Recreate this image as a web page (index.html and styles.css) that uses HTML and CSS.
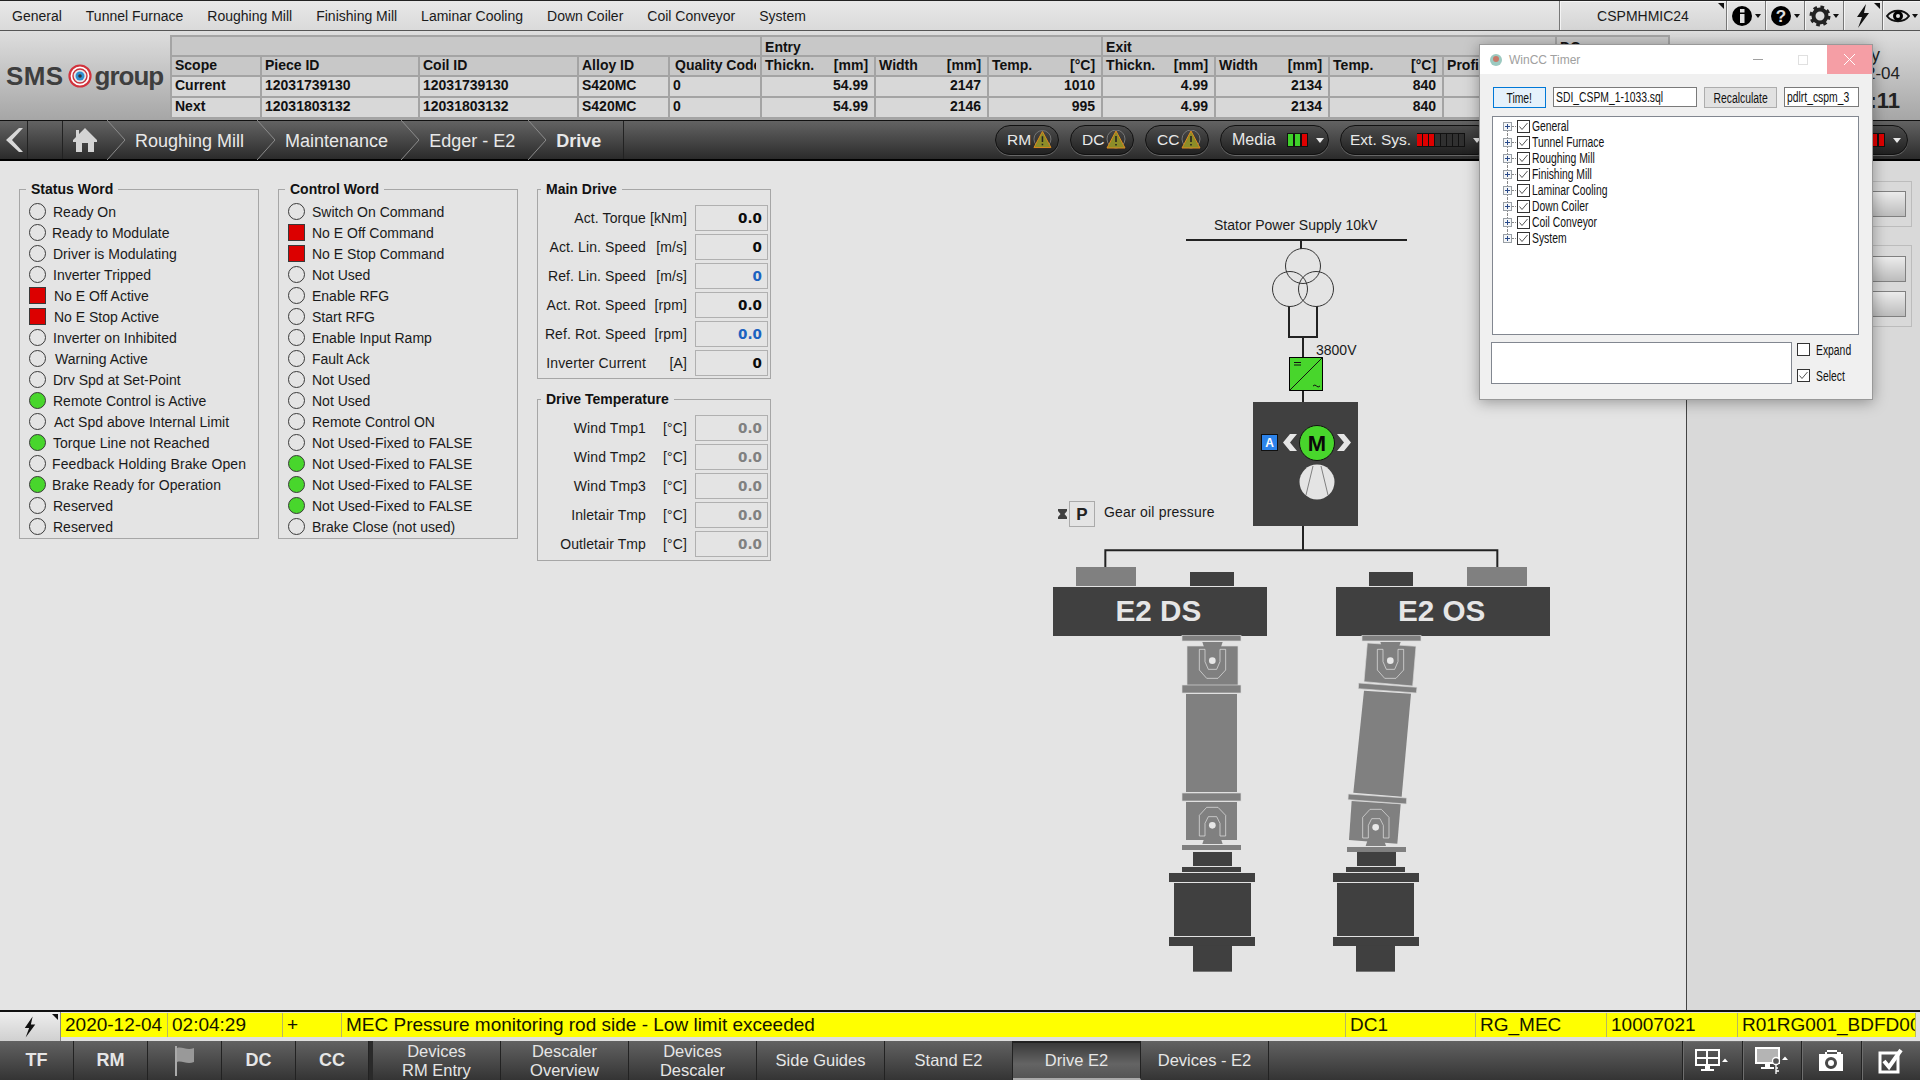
FILE: index.html
```html
<!DOCTYPE html>
<html>
<head>
<meta charset="utf-8">
<title>Drive E2</title>
<link rel="stylesheet" href="styles.css">
</head>
<body>
<svg class="defs">
  <symbol id="bolt" viewBox="0 0 16 24"><path d="M11 0 L2 13 H7 L3 24 L14 9 H9 Z"/></symbol>
  <symbol id="plus" viewBox="0 0 9 9"><rect x=".5" y=".5" width="8" height="8" fill="#f4f6f8" stroke="#9aa0a6"/><path d="M2 4.5 H7 M4.5 2 V7" stroke="#2a4a8a"/></symbol>
  <symbol id="tick" viewBox="0 0 13 13"><rect x=".5" y=".5" width="12" height="12" fill="#fff" stroke="#333"/><path d="M2.5 6.5 L5 9.5 L10.5 3" fill="none" stroke="#555"/></symbol>
  <symbol id="warn" viewBox="0 0 20 20"><circle cx="10" cy="9" r="9" fill="none" stroke="#777"/><path d="M10 1 L19 18 H1 Z" fill="#8d8d28" stroke="#e08a1e"/><path d="M10 6 V12 M10 14 V15.5" stroke="#222" stroke-width="1.6"/></symbol>
</svg>

<div class="menu">
  <div class="menu-items">
    <span>General</span><span>Tunnel Furnace</span><span>Roughing Mill</span><span>Finishing Mill</span><span>Laminar Cooling</span><span>Down Coiler</span><span>Coil Conveyor</span><span>System</span>
  </div>
  <div class="tool host">CSPMHMIC24</div>
  <div class="tool">
    <svg width="22" height="22" viewBox="0 0 22 22"><circle cx="11" cy="11" r="10"/><rect x="9" y="9" width="4.5" height="9" fill="#e0e0e0"/><rect x="9" y="4" width="4.5" height="3.5" fill="#e0e0e0"/></svg><b class="caret dark"></b>
  </div>
  <div class="tool">
    <svg width="22" height="22" viewBox="0 0 22 22"><circle cx="11" cy="11" r="10"/><text x="11" y="17" class="q">?</text></svg><b class="caret dark"></b>
  </div>
  <div class="tool">
    <svg width="22" height="22" viewBox="0 0 22 22"><circle cx="11" cy="11" r="6.5" fill="none" stroke="#222" stroke-width="4"/><circle cx="11" cy="11" r="8.5" fill="none" stroke="#222" stroke-width="4" stroke-dasharray="3.4 3.3"/></svg><b class="caret dark"></b>
  </div>
  <div class="tool corner"><svg width="16" height="24" fill="#111"><use href="#bolt"/></svg></div>
  <div class="tool end">
    <svg width="24" height="16" viewBox="0 0 24 16"><path d="M1 8 C6 1 18 1 23 8 C18 15 6 15 1 8 Z" fill="#e0e0e0" stroke="#111" stroke-width="2"/><circle cx="12" cy="8" r="5"/><circle cx="12" cy="8" r="2" fill="#e0e0e0"/></svg><b class="caret dark"></b>
  </div>
</div>

<div class="head">
  <div class="logo">
    <span class="logo-sms">SMS</span>
    <svg width="24" height="24" viewBox="0 0 24 24"><circle cx="12" cy="12" r="10.5" fill="#fff" stroke="#d2323c" stroke-width="2.2"/><circle cx="12" cy="12" r="7" fill="#e8e8e8" stroke="#c8323c" stroke-width="1.4"/><circle cx="12" cy="12" r="4.5" fill="#2f8fd0"/><circle cx="12" cy="12" r="1.8" fill="#333"/></svg>
    <span class="logo-group">group</span>
  </div>
  <table class="coils">
    <colgroup>
      <col class="c90"><col class="c158"><col class="c159"><col class="c91"><col class="c92">
      <col class="c114"><col class="c113"><col class="c114"><col class="c113"><col class="c114"><col class="c114"><col class="c113"><col class="c113">
    </colgroup>
    <tr class="group"><th colspan="5"></th><th colspan="3">Entry</th><th colspan="4">Exit</th><th>DC</th></tr>
    <tr class="names">
      <th>Scope</th><th>Piece ID</th><th>Coil ID</th><th>Alloy ID</th><th><div class="clip">Quality Code</div></th>
      <th><div class="unit"><span>Thickn.</span><span>[mm]</span></div></th>
      <th><div class="unit"><span>Width</span><span>[mm]</span></div></th>
      <th><div class="unit"><span>Temp.</span><span>[°C]</span></div></th>
      <th><div class="unit"><span>Thickn.</span><span>[mm]</span></div></th>
      <th><div class="unit"><span>Width</span><span>[mm]</span></div></th>
      <th><div class="unit"><span>Temp.</span><span>[°C]</span></div></th>
      <th>Profile</th><th></th>
    </tr>
    <tr>
      <td>Current</td><td>12031739130</td><td>12031739130</td><td>S420MC</td><td>0</td>
      <td class="num">54.99</td><td class="num">2147</td><td class="num">1010</td><td class="num">4.99</td><td class="num">2134</td><td class="num">840</td><td></td><td></td>
    </tr>
    <tr>
      <td>Next</td><td>12031803132</td><td>12031803132</td><td>S420MC</td><td>0</td>
      <td class="num">54.99</td><td class="num">2146</td><td class="num">995</td><td class="num">4.99</td><td class="num">2134</td><td class="num">840</td><td></td><td></td>
    </tr>
  </table>
  <div class="clock">
    <span class="clock-day">Friday</span>
    <span class="clock-date">2020-12-04</span>
    <span class="clock-time">02:04:11</span>
  </div>
</div>

<div class="bar">
  <div class="back"><svg width="18" height="24" viewBox="0 0 18 24"><path d="M14 0 H18 L7 12 L18 24 H14 L1 12 Z" fill="#d8d8d8"/></svg></div>
  <div class="home">
    <svg width="24" height="24" viewBox="0 0 24 24"><path d="M12 0 L24 12 V14 H21 V24 H15 V15 H9 V24 H3 V14 H0 V12 L3 9 V2 H6 V6 Z" fill="#d4d4d4"/></svg>
  </div>
  <svg class="chev" width="18" height="40" viewBox="0 0 18 40"><path d="M0 0 L18 20 L0 40"/></svg>
  <span class="crumb">Roughing Mill</span>
  <svg class="chev" width="18" height="40" viewBox="0 0 18 40"><path d="M0 0 L18 20 L0 40"/></svg>
  <span class="crumb">Maintenance</span>
  <svg class="chev" width="18" height="40" viewBox="0 0 18 40"><path d="M0 0 L18 20 L0 40"/></svg>
  <span class="crumb">Edger - E2</span>
  <svg class="chev" width="18" height="40" viewBox="0 0 18 40"><path d="M0 0 L18 20 L0 40"/></svg>
  <span class="crumb now">Drive</span>
  <div class="pills">
    <div class="pill alarm">RM<svg width="20" height="20"><use href="#warn"/></svg></div>
    <div class="pill alarm">DC<svg width="20" height="20"><use href="#warn"/></svg></div>
    <div class="pill alarm">CC<svg width="20" height="20"><use href="#warn"/></svg></div>
    <div class="pill media">Media<span class="lamps"><i class="g"></i><i class="g"></i><i class="r"></i></span><b class="caret"></b></div>
    <div class="pill ext">Ext. Sys.<span class="lamps"><i class="r"></i><i class="r"></i><i class="r"></i><i></i><i></i><i></i><i></i><i></i></span><b class="caret"></b></div>
    <div class="pill last"><span class="lamps"><i class="r"></i><i class="r"></i></span><b class="caret"></b></div>
  </div>
</div>

<div class="main">
  <fieldset class="word">
    <legend>Status Word</legend>
    <div class="led"><i></i><span>Ready On</span></div>
    <div class="led"><i></i><span class="l1">Ready to Modulate</span></div>
    <div class="led"><i></i><span>Driver is Modulating</span></div>
    <div class="led"><i></i><span>Inverter Tripped</span></div>
    <div class="led"><i class="red"></i><span class="r1">No E Off Active</span></div>
    <div class="led"><i class="red"></i><span class="r1">No E Stop Active</span></div>
    <div class="led"><i></i><span>Inverter on Inhibited</span></div>
    <div class="led"><i></i><span class="r2">Warning Active</span></div>
    <div class="led"><i></i><span>Drv Spd at Set-Point</span></div>
    <div class="led"><i class="on"></i><span>Remote Control is Active</span></div>
    <div class="led"><i></i><span class="r1">Act Spd above Internal Limit</span></div>
    <div class="led"><i class="on"></i><span>Torque Line not Reached</span></div>
    <div class="led"><i></i><span class="l1 wide">Feedback Holding Brake Open</span></div>
    <div class="led"><i class="on"></i><span class="l1 wide">Brake Ready for Operation</span></div>
    <div class="led"><i></i><span>Reserved</span></div>
    <div class="led"><i></i><span>Reserved</span></div>
  </fieldset>
  <fieldset class="word">
    <legend>Control Word</legend>
    <div class="led"><i></i><span>Switch On Command</span></div>
    <div class="led"><i class="red"></i><span>No E Off Command</span></div>
    <div class="led"><i class="red"></i><span>No E Stop Command</span></div>
    <div class="led"><i></i><span>Not Used</span></div>
    <div class="led"><i></i><span>Enable RFG</span></div>
    <div class="led"><i></i><span>Start RFG</span></div>
    <div class="led"><i></i><span>Enable Input Ramp</span></div>
    <div class="led"><i></i><span>Fault Ack</span></div>
    <div class="led"><i></i><span>Not Used</span></div>
    <div class="led"><i></i><span>Not Used</span></div>
    <div class="led"><i></i><span>Remote Control ON</span></div>
    <div class="led"><i></i><span>Not Used-Fixed to FALSE</span></div>
    <div class="led"><i class="on"></i><span>Not Used-Fixed to FALSE</span></div>
    <div class="led"><i class="on"></i><span>Not Used-Fixed to FALSE</span></div>
    <div class="led"><i class="on"></i><span>Not Used-Fixed to FALSE</span></div>
    <div class="led"><i></i><span>Brake Close (not used)</span></div>
  </fieldset>
  <div class="drive-col">
    <fieldset class="vals main-drive">
      <legend>Main Drive</legend>
      <div class="val"><span>Act. Torque</span><span>[kNm]</span><b>0.0</b></div>
      <div class="val"><span>Act. Lin. Speed</span><span>[m/s]</span><b>0</b></div>
      <div class="val"><span>Ref. Lin. Speed</span><span>[m/s]</span><b class="ref">0</b></div>
      <div class="val"><span>Act. Rot. Speed</span><span>[rpm]</span><b>0.0</b></div>
      <div class="val"><span>Ref. Rot. Speed</span><span>[rpm]</span><b class="ref">0.0</b></div>
      <div class="val"><span>Inverter Current</span><span>[A]</span><b>0</b></div>
    </fieldset>
    <fieldset class="vals temps">
      <legend>Drive Temperature</legend>
      <div class="val"><span>Wind Tmp1</span><span>[°C]</span><b class="dim">0.0</b></div>
      <div class="val"><span>Wind Tmp2</span><span>[°C]</span><b class="dim">0.0</b></div>
      <div class="val"><span>Wind Tmp3</span><span>[°C]</span><b class="dim">0.0</b></div>
      <div class="val"><span>Inletair Tmp</span><span>[°C]</span><b class="dim">0.0</b></div>
      <div class="val"><span>Outletair Tmp</span><span>[°C]</span><b class="dim">0.0</b></div>
    </fieldset>
  </div>

  <svg class="diagram" width="646" height="849" viewBox="1040 161 646 849">
    <text x="1214" y="230" class="lbl">Stator Power Supply 10kV</text>
    <path d="M1186 240 H1407 M1301 240 V249 M1289 306 V337 H1317 V306 M1303 337 V358 M1303 391 V402 M1303 526 V551" class="wire"/>
    <circle cx="1303" cy="266" r="17.5" class="coil"/>
    <circle cx="1290" cy="289" r="17.5" class="coil"/>
    <circle cx="1316" cy="289" r="17.5" class="coil"/>
    <text x="1316" y="355" class="lbl">3800V</text>
    <rect x="1289.5" y="357.5" width="33" height="33" fill="#48d62c" stroke="#000"/>
    <path d="M1289 391 L1323 357 M1294 362.5 H1301 M1294 365 H1301 M1313 386 q2 -2 3.500 0 t3.500 0" fill="none" stroke="#111"/>

    <rect x="1253" y="402" width="105" height="124" fill="#404040"/>
    <rect x="1261.500" y="434.500" width="16" height="16" fill="#2c83ea" stroke="#111"/>
    <text x="1269.500" y="447" class="badge">A</text>
    <path d="M1297 434 H1290 L1283 442.500 L1290 451 H1297 L1290 442.500 Z M1337 434 H1344 L1351 442.500 L1344 451 H1337 L1344 442.500 Z" fill="#e6e6e6"/>
    <circle cx="1317" cy="443" r="17.500" fill="#48d62c" stroke="#111"/>
    <text x="1317" y="451" class="motor">M</text>
    <circle cx="1317" cy="482" r="17.500" fill="#e4e4e4"/>
    <path d="M1313 466 L1306 495 M1321 466 L1328 495" stroke="#808080" fill="none"/>

    <path d="M1058 509 H1067 V511 L1064.500 514 L1067 517 V519 H1058 V517 L1060.500 514 L1058 511 Z" fill="#404040"/>
    <rect x="1069.500" y="501.500" width="25" height="25" fill="none" stroke="#aaa"/>
    <text x="1082" y="520" class="pfont">P</text>
    <text x="1104" y="517" class="lbl oil">Gear oil pressure</text>

    <g transform="translate(1040 540) scale(.33333)">
      <path d="M196 87 V31 H1372 V87" class="wire thick"/>

      <rect x="108" y="81" width="180" height="57" fill="#808080"/>
      <rect x="450" y="96" width="132" height="42" fill="#404040"/>
      <rect x="39" y="141" width="642" height="147" fill="#404040"/>
      <text x="355" y="242" class="roll">E2 DS</text>

      <rect x="1281" y="81" width="180" height="57" fill="#808080"/>
      <rect x="987" y="96" width="132" height="42" fill="#404040"/>
      <rect x="888" y="141" width="642" height="147" fill="#404040"/>
      <text x="1205" y="242" class="roll">E2 OS</text>

      <g class="shaft">
        <rect x="426" y="287" width="177" height="16"/>
        <rect x="441" y="318" width="153" height="118"/>
        <rect x="426" y="435" width="177" height="24"/>
        <rect x="438" y="462" width="153" height="294" class="plain"/>
        <rect x="426" y="759" width="177" height="24"/>
        <rect x="438" y="786" width="153" height="114" class="plain"/>
        <rect x="426" y="915" width="177" height="15" class="plain"/>
      </g>
      <g class="shaft">
        <rect x="966" y="287" width="177" height="16"/>
        <path d="M982 309 L1128 319 L1118 438 L972 425 Z"/>
        <path d="M956 429 L1131 442 L1129 459 L955 446 Z"/>
        <path d="M972 452 L1113 461 L1085 770 L940 758 Z" class="plain"/>
        <path d="M925 762 L1100 774 L1099 792 L924 779 Z"/>
        <path d="M935 783 L1082 793 L1072 911 L927 900 Z" class="plain"/>
        <rect x="921" y="921" width="177" height="15" class="plain"/>
      </g>

      <g class="yoke" id="yoke-top">
        <path d="M487 306 H548 L540 330 V365 L530 388 H505 L495 365 V330 Z" class="pad"/>
        <path d="M495 328 H478 V390 L500 415 H534 L557 390 V328 H540 M495 328 V365 L505 388 H530 L540 365 V328"/>
        <circle cx="517" cy="362" r="10" class="pin"/>
      </g>
      <use href="#yoke-top" x="534" y="0"/>
      <g class="yoke" id="yoke-bot">
        <path d="M487 912 H548 L540 888 V850 L530 830 H505 L495 850 V888 Z" class="pad"/>
        <path d="M495 888 H478 V826 L500 802 H534 L557 826 V888 H540 M495 888 V850 L505 830 H530 L540 850 V888"/>
        <circle cx="517" cy="856" r="10" class="pin"/>
      </g>
      <use href="#yoke-bot" x="490" y="6"/>

      <g fill="#404040">
        <rect x="459" y="936" width="117" height="42"/>
        <rect x="426" y="981" width="177" height="15"/>
        <rect x="387" y="999" width="258" height="27"/>
        <rect x="402" y="1029" width="231" height="159"/>
        <rect x="387" y="1191" width="258" height="27"/>
        <rect x="459" y="1218" width="117" height="77"/>
        <rect x="951" y="936" width="117" height="42"/>
        <rect x="918" y="981" width="177" height="15"/>
        <rect x="879" y="999" width="258" height="27"/>
        <rect x="891" y="1029" width="231" height="159"/>
        <rect x="879" y="1191" width="258" height="27"/>
        <rect x="948" y="1218" width="117" height="77"/>
      </g>
    </g>
  </svg>

  <div class="side">
    <div class="side-box"><div class="side-btn"></div></div>
    <div class="side-box"><div class="side-btn"></div><div class="side-btn"></div></div>
  </div>
</div>

<div class="alarm-row">
  <div class="alarm-btn corner"><svg width="14" height="22" fill="#111"><use href="#bolt"/></svg></div>
  <div class="alarm-line">
    <span class="w107">2020-12-04</span><span class="w115">02:04:29</span><span class="w59">+</span><span class="w1004">MEC Pressure monitoring rod side - Low limit exceeded</span><span class="w130">DC1</span><span class="w131">RG_MEC</span><span class="w131">10007021</span><span class="w178">R01RG001_BDFD001</span>
  </div>
</div>

<div class="nav">
  <div class="nb short heavy">TF</div>
  <div class="nb short heavy">RM</div>
  <div class="nb short"><svg width="20" height="30" viewBox="0 0 20 30"><path d="M1 0 V30" stroke="#aaa" stroke-width="2"/><path d="M2 2 C7 0 12 5 19 2 V16 C12 19 7 14 2 16 Z" fill="#999"/></svg></div>
  <div class="nb short heavy">DC</div>
  <div class="nb short heavy gap">CC</div>
  <div class="nb two"><span>Devices</span><span>RM Entry</span></div>
  <div class="nb two"><span>Descaler</span><span>Overview</span></div>
  <div class="nb two"><span>Devices</span><span>Descaler</span></div>
  <div class="nb">Side Guides</div>
  <div class="nb">Stand E2</div>
  <div class="nb active">Drive E2</div>
  <div class="nb">Devices - E2</div>
  <div class="nav-fill"></div>
  <div class="ib">
    <svg width="36" height="24" viewBox="0 0 36 24" fill="#fff"><path d="M1 0 H26 V17 H1 Z M3 2 V8 H12 V2 Z M14 2 V8 H24 V2 Z M3 10 V15 H12 V10 Z M14 10 V15 H24 V10 Z M11 17 H16 V20 H20 V22 H7 V20 H11 Z" fill-rule="evenodd"/><path d="M28 13 L31 9.500 L34 13 Z"/></svg>
  </div>
  <div class="ib">
    <svg width="36" height="28" viewBox="0 0 36 28" fill="#fff"><path d="M1 0 H26 V17 H1 Z"/><rect x="3" y="2" width="21" height="13" fill="#b4b4b4"/><path d="M11 17 H16 V20 H20 V22 H7 V20 H11 Z"/><circle cx="22" cy="14" r="3.500" fill="#555" stroke="#fff" stroke-width="1.300"/><path d="M22 18 V27 M22 24 H25 M22 21 H24" stroke="#fff" stroke-width="1.300" fill="none"/><path d="M28 13 L31 9.500 L34 13 Z"/></svg>
  </div>
  <div class="ib">
    <svg width="26" height="22" viewBox="0 0 26 22" fill="#fff"><path d="M1 4 H7 V2 H9 V0 H19 V2 H23 V4 H25 V21 H1 Z M9 2 V4 H19 V2 Z M13 7 A6 6 0 1 0 13 19 A6 6 0 1 0 13 7 Z" fill-rule="evenodd"/><circle cx="13" cy="13" r="3"/></svg>
  </div>
  <div class="ib">
    <svg width="26" height="26" viewBox="0 0 26 26"><rect x="2" y="5" width="18" height="19" fill="none" stroke="#fff" stroke-width="3"/><path d="M6 13 L11 19 L23 2" fill="none" stroke="#fff" stroke-width="4"/></svg>
  </div>
</div>

<div class="win">
  <div class="win-title">
    <svg width="14" height="14" viewBox="0 0 14 14"><circle cx="7" cy="7" r="6" fill="#9cc9c0"/><circle cx="7" cy="6" r="3" fill="#c87868"/></svg>
    <span class="win-name">WinCC Timer</span>
    <i class="win-min"></i><i class="win-max"></i>
    <div class="win-close"><svg width="11" height="11" viewBox="0 0 11 11"><path d="M0 0 L11 11 M11 0 L0 11" stroke="#fff"/></svg></div>
  </div>
  <div class="win-top">
    <div class="btn btn-on"><span class="sq mid">Time!</span></div>
    <div class="inp i144"><span class="sq">SDI_CSPM_1-1033.sql</span></div>
    <div class="btn"><span class="sq mid">Recalculate</span></div>
    <div class="inp i75"><span class="sq">pdlrt_cspm_3</span></div>
  </div>
  <div class="tree">
    <div class="node"><svg width="9" height="9"><use href="#plus"/></svg><u></u><svg width="13" height="13"><use href="#tick"/></svg><span class="sq">General</span></div>
    <div class="node"><svg width="9" height="9"><use href="#plus"/></svg><u></u><svg width="13" height="13"><use href="#tick"/></svg><span class="sq">Tunnel Furnace</span></div>
    <div class="node"><svg width="9" height="9"><use href="#plus"/></svg><u></u><svg width="13" height="13"><use href="#tick"/></svg><span class="sq">Roughing Mill</span></div>
    <div class="node"><svg width="9" height="9"><use href="#plus"/></svg><u></u><svg width="13" height="13"><use href="#tick"/></svg><span class="sq">Finishing Mill</span></div>
    <div class="node"><svg width="9" height="9"><use href="#plus"/></svg><u></u><svg width="13" height="13"><use href="#tick"/></svg><span class="sq">Laminar Cooling</span></div>
    <div class="node"><svg width="9" height="9"><use href="#plus"/></svg><u></u><svg width="13" height="13"><use href="#tick"/></svg><span class="sq">Down Coiler</span></div>
    <div class="node"><svg width="9" height="9"><use href="#plus"/></svg><u></u><svg width="13" height="13"><use href="#tick"/></svg><span class="sq">Coil Conveyor</span></div>
    <div class="node"><svg width="9" height="9"><use href="#plus"/></svg><u></u><svg width="13" height="13"><use href="#tick"/></svg><span class="sq">System</span></div>
  </div>
  <div class="win-bot">
    <div class="memo"></div>
    <div class="checks">
      <div class="chk"><svg width="13" height="13" viewBox="0 0 13 13"><rect x=".5" y=".5" width="12" height="12" fill="#fff" stroke="#333"/></svg><span class="sq">Expand</span></div>
      <div class="chk"><svg width="13" height="13"><use href="#tick"/></svg><span class="sq">Select</span></div>
    </div>
  </div>
</div>
</body>
</html>
```

FILE: styles.css
```css
* { box-sizing: border-box; }

html, body {
  margin: 0;
  height: 1080px;
  overflow: hidden;
}
body {
  display: flex;
  flex-direction: column;
  position: relative;
  background: #e4e4e4;
  color: #1a1a1a;
  font-family: "Liberation Sans", Arial, sans-serif;
  font-size: 14px;
}
.defs { position: absolute; width: 0; height: 0; }

.caret {
  display: inline-block;
  width: 0;
  height: 0;
  flex: none;
  border-left: 4px solid transparent;
  border-right: 4px solid transparent;
  border-top: 5px solid #e8e8e8;
}
.caret.dark { border-left-width: 3px; border-right-width: 3px; border-top: 4px solid #111; margin-left: 2px; }
.corner { position: relative; }
.corner::after {
  content: "";
  position: absolute;
  top: 2px;
  right: 2px;
  border-top: 6px solid #111;
  border-left: 6px solid transparent;
}

/* top menu */
.menu {
  display: flex;
  height: 31px;
  flex: none;
  border-top: 1px solid #222;
  border-bottom: 1px solid #555;
  background: linear-gradient(#e8e8e8, #dadada);
}
.menu-items {
  display: flex;
  gap: 24px;
  width: 1559px;
  padding-left: 12px;
  align-items: center;
}
.tool {
  display: flex;
  align-items: center;
  justify-content: center;
  width: 39px;
  border-left: 1px solid #777;
  box-shadow: inset 1px 1px 0 #f4f4f4;
  background: linear-gradient(#e6e6e6, #d4d4d4);
}
.tool.end { flex: 1; }
.host { width: 167px; font-size: 14px; position: relative; }
.host::after {
  content: "";
  position: absolute;
  top: 2px;
  right: 2px;
  border-top: 6px solid #111;
  border-left: 6px solid transparent;
}
.q { font: bold 17px "Liberation Sans", sans-serif; fill: #e0e0e0; text-anchor: middle; }

/* product header */
.head {
  display: flex;
  height: 89px;
  flex: none;
  background: linear-gradient(#dedede, #a6a6a6);
}
.logo {
  display: flex;
  align-items: center;
  width: 170px;
  flex: none;
  padding: 0 0 0 6px;
  height: 90px;
  font-size: 26px;
  font-weight: bold;
  color: #3e3e3e;
}
.logo-sms { margin-right: 4px; letter-spacing: .4px; }
.logo-group { margin-left: 3px; letter-spacing: -1px; }
.coils {
  table-layout: fixed;
  width: 1498px;
  height: 80px;
  flex: none;
  margin-top: 4px;
  border-collapse: collapse;
  font-weight: bold;
  font-size: 14px;
  color: #111;
}
.c90 { width: 90px; } .c91 { width: 91px; } .c92 { width: 92px; }
.c113 { width: 113px; } .c114 { width: 114px; }
.c158 { width: 158px; } .c159 { width: 159px; }
.coils th, .coils td {
  height: 20px;
  padding: 0 6px 2px 3px;
  border: 2px solid #a4a4a4;
  text-align: left;
  white-space: nowrap;
  overflow: hidden;
}
.coils tr { background: #d8d8d8; }
.coils tr.group, .coils tr.names { background: #c8c8c8; }
.coils tr.group th { padding-top: 1px; padding-bottom: 0; }
.coils td { padding-bottom: 3px; }
.coils td.num { text-align: right; }
.unit { display: flex; justify-content: space-between; }
.clip { width: 81px; margin-left: 2px; overflow: hidden; }
.clock {
  display: flex;
  flex-direction: column;
  align-items: flex-end;
  flex: 1;
  padding: 14px 20px 0 0;
  color: #222;
}
.clock-day { font-size: 18px; line-height: 20px; margin-right: 20px; }
.clock-date { font-size: 17px; line-height: 17px; }
.clock-time { font-size: 22px; font-weight: bold; line-height: 37px; }

/* breadcrumb bar */
.bar {
  display: flex;
  align-items: center;
  height: 41px;
  flex: none;
  color: #e8e8e8;
  font-size: 18px;
  border-top: 1px solid #111;
  border-bottom: 2px solid #000;
  background: linear-gradient(#636363, #2b2b2b);
}
.back {
  display: flex;
  align-items: center;
  justify-content: center;
  width: 28px;
  height: 100%;
  border-right: 1px solid #222;
}
.home {
  display: flex;
  align-items: center;
  width: 45px;
  height: 100%;
  margin-left: 34px;
  padding-left: 10px;
  border-left: 1px solid #222;
}
.chev { flex: none; }
.chev path { fill: none; stroke: #8c8c8c; }
.crumb { padding: 2px 13px 0 10px; }
.crumb.now { font-weight: bold; padding: 0 22px 0 10px; border-right: 1px solid #222; height: 100%; line-height: 40px; }
.pills {
  display: flex;
  gap: 11px;
  width: 913px;
  margin-left: auto;
  margin-right: 12px;
  font-size: 16px;
}
.pill {
  display: flex;
  align-items: center;
  flex: none;
  gap: 2px;
  height: 30px;
  padding: 0 6px 0 11px;
  border: 1px solid #111;
  border-radius: 15px;
  white-space: nowrap;
  background: linear-gradient(#4c4c4c, #202020);
  box-shadow: 0 1px 0 #666;
}
.pill.alarm { width: 64px; font-size: 15.500px; }
.media { width: 109px; padding-left: 11px; }
.ext { width: 152px; padding-left: 9px; font-size: 15.500px; }
.last { flex: 1; justify-content: flex-end; padding-right: 6px; }
.lamps { display: flex; flex: none; margin: 0 6px 0 9px; }
.ext .lamps { margin: 0 6px 0 4px; }
.lamps i {
  width: 6px;
  height: 14px;
  flex: none;
  border: 1px solid #111;
  background: #303030;
}
.ext .lamps i { border-left: 0; }
.media .lamps i { width: 7px; }
.last .lamps i { width: 7px; }
.lamps .g { background: #3fd02a; }
.lamps .r { background: #e00000; }
.ext .lamps .r { background: #e00000; }

/* main area */
.main {
  display: flex;
  flex: 1;
  min-height: 0;
  padding: 20px 0 0 19px;
}
fieldset {
  margin: 0;
  padding: 0;
  border: 1px solid #a6a6a6;
  min-width: 0;
}
legend {
  margin-left: 3px;
  padding: 0 5px;
  font-weight: bold;
  color: #111;
  line-height: 16px;
}
.word {
  width: 240px;
  height: 358px;
  margin-right: 19px;
  padding: 4px 0 0 9px;
  flex: none;
}
.word legend { margin-left: -3px; }
.led {
  display: flex;
  align-items: center;
  height: 21px;
  white-space: nowrap;
}
.led i {
  width: 17px;
  height: 17px;
  flex: none;
  margin-right: 7px;
  border: 1.500px solid #3a3a3a;
  border-radius: 50%;
}
.led i.on { background: #48d62c; }
.led i.red { background: #dc0000; border-radius: 0; }
.l1 { margin-left: -1px; }
.r1 { margin-left: 1px; }
.r2 { margin-left: 2px; }
.wide { letter-spacing: .1px; }

.drive-col { width: 234px; flex: none; }
.vals { width: 234px; padding-top: 8px; }
.main-drive { height: 198px; }
.temps { height: 170px; margin-top: 12px; }
.val {
  display: grid;
  grid-template-columns: 108px 41px 73px;
  column-gap: 0;
  align-items: center;
  height: 26px;
  margin-bottom: 3px;
  white-space: nowrap;
}
.val span { text-align: right; letter-spacing: .1px; }
.val b {
  margin-left: 8px;
  width: 73px;
  height: 26px;
  padding-right: 5px;
  text-align: right;
  border: 1px solid #b0b0b0;
  font: bold 13.500px/24px "DejaVu Sans", sans-serif;
  color: #0c0c0c;
}
.val b.ref { color: #1c62c0; }
.val b.dim { color: #808080; }

.diagram {
  flex: none;
  margin: -20px 0 0 auto;
  height: 849px;
}
.wire { fill: none; stroke: #222; stroke-width: 2; }
.wire.thick { stroke-width: 6; stroke: #222; }
.coil { fill: none; stroke: #333; stroke-width: 1; }
.lbl { font: 14px "Liberation Sans", sans-serif; fill: #1a1a1a; }
.oil { letter-spacing: .2px; }
.badge { font: bold 12px "Liberation Sans", sans-serif; fill: #fff; text-anchor: middle; }
.motor { font: bold 22px "Liberation Sans", sans-serif; fill: #0a0a0a; text-anchor: middle; }
.pfont { font: bold 17px "Liberation Sans", sans-serif; fill: #222; text-anchor: middle; }
.roll { font: bold 89px "Liberation Sans", sans-serif; fill: #e6e6e6; text-anchor: middle; }
.shaft rect, .shaft path { fill: #808080; stroke: #d8d8d8; stroke-width: 2; }
.shaft .plain { stroke: none; }
.yoke path { fill: none; stroke: #e8e8e8; stroke-width: 2; }
.yoke path.pad { fill: #808080; stroke: none; }
.yoke .pin { fill: #e8e8e8; }

.side {
  width: 234px;
  flex: none;
  margin-top: -20px;
  padding: 20px 8px 0 14px;
  background: #d9d9d9;
  border-left: 1px solid #444;
}
.side-box {
  margin-bottom: 18px;
  padding: 9px 5px;
  border: 1px solid #bcbcbc;
}
.side-box + .side-box { padding-top: 10px; }
.side-btn {
  height: 26px;
  border: 1px solid #808080;
  background: linear-gradient(#ececec, #bcbcbc);
}
.side-btn + .side-btn { margin-top: 9px; }

/* alarm line */
.alarm-row {
  display: flex;
  height: 31px;
  flex: none;
  border-top: 2px solid #111;
  background: #e0e0e0;
}
.alarm-btn {
  display: flex;
  align-items: center;
  justify-content: center;
  width: 61px;
  border-right: 1px solid #888;
  background: linear-gradient(#eeeeee, #d0d0d0);
}
.alarm-line {
  display: flex;
  height: 24px;
  width: 1855px;
  margin-top: 1px;
  overflow: hidden;
  background: #ffff00;
  font-size: 19px;
  line-height: 24px;
  white-space: nowrap;
  color: #141400;
}
.alarm-line span {
  flex: none;
  padding-left: 4px;
  border-right: 1px solid #b8b860;
  overflow: hidden;
}
.w59 { width: 59px; } .w107 { width: 107px; } .w115 { width: 115px; }
.w130 { width: 130px; } .w131 { width: 131px; } .w178 { width: 178px; }
.w1004 { width: 1004px; }

/* bottom nav */
.nav {
  display: flex;
  height: 39px;
  flex: none;
  color: #e6e6e6;
  font-size: 16.500px;
  background: linear-gradient(#626262, #343434);
}
.nb {
  display: flex;
  flex-direction: column;
  align-items: center;
  justify-content: center;
  width: 128px;
  flex: none;
  border-right: 1px solid #222;
  overflow: hidden;
  white-space: nowrap;
}
.nb.short { width: 74px; }
.nb.gap { margin-right: 4px; width: 73px; box-shadow: 4px 0 0 #2a2a2a; }
.nb.heavy { font-size: 18px; font-weight: bold; }
.nb.two { justify-content: flex-start; line-height: 19px; padding-top: 1px; }
.nb.active {
  background: linear-gradient(#3a3a3a, #646464 60%, #555);
  border-top: 2px solid #222;
  border-bottom: 2px solid #aaa;
}
.nav-fill { flex: 1; }
.ib {
  display: flex;
  align-items: center;
  justify-content: center;
  width: 59.500px;
  flex: none;
  border-left: 1px solid #222;
  box-shadow: inset 1px 1px 0 #6e6e6e;
}

/* floating timer window */
.win {
  position: absolute;
  left: 1479px;
  top: 44px;
  width: 394px;
  height: 356px;
  background: #f0f0f0;
  border: 1px solid #999;
  box-shadow: 0 2px 14px rgba(0, 0, 0, .35);
}
.sq {
  display: inline-block;
  font-size: 14px;
  color: #111;
  white-space: nowrap;
  transform: scaleX(.74);
  transform-origin: left center;
}
.sq.mid { transform-origin: center; }
.win-title {
  display: flex;
  align-items: center;
  height: 29px;
  padding-left: 9px;
  background: #fff;
}
.win-name { margin-left: 6px; color: #a0a0a0; font-size: 12px; }
.win-min { width: 10px; height: 1px; margin-left: 173px; background: #a0a0a0; }
.win-max { width: 10px; height: 10px; margin-left: 35px; border: 1px solid #e0e0e0; }
.win-close {
  display: flex;
  align-items: center;
  justify-content: center;
  width: 45px;
  height: 29px;
  margin-left: auto;
  background: #f59ea5;
}
.win-top {
  display: flex;
  gap: 7px;
  margin: 13px 0 0 13px;
}
.btn {
  display: flex;
  align-items: center;
  justify-content: center;
  width: 73px;
  height: 21px;
  background: #e1e1e1;
  border: 1px solid #adadad;
}
.btn-on { width: 53px; background: #e5f1fb; border-color: #0078d7; }
.inp {
  height: 20px;
  padding-left: 2px;
  background: #fff;
  border: 1px solid #7a7a7a;
  line-height: 18px;
  overflow: hidden;
}
.i144 { width: 144px; }
.i75 { width: 75px; }
.tree {
  width: 367px;
  height: 219px;
  margin: 8px 0 0 12px;
  padding: 1px 0 0 10px;
  background: #fff;
  border: 1px solid #828790;
}
.node {
  display: flex;
  align-items: center;
  height: 16px;
  position: relative;
}
.node::before {
  content: "";
  position: absolute;
  left: 4px;
  top: 0;
  height: 16px;
  border-left: 1px dotted #888;
}
.node:first-child::before { top: 8px; height: 8px; }
.node:last-child::before { height: 8px; }
.node svg { position: relative; }
.node u {
  width: 4px;
  height: 1px;
  margin-right: 1px;
  border-top: 1px dotted #888;
}
.node .sq { margin-left: 2px; }
.win-bot {
  display: flex;
  margin: 7px 0 0 11px;
}
.memo {
  width: 301px;
  height: 42px;
  background: #fff;
  border: 1px solid #828790;
}
.checks { margin-left: 5px; }
.chk {
  display: flex;
  align-items: center;
  gap: 6px;
  height: 13px;
  margin: 1px 0 13px;
}
```
